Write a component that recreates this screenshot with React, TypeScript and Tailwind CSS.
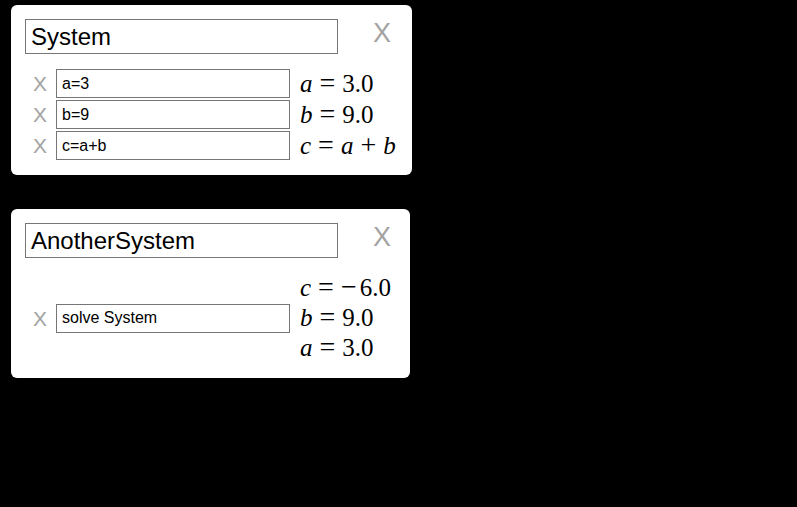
import React from 'react';

type Row = { text: string; result?: React.ReactNode };

const V = ({ children }: { children: React.ReactNode }) => <i className="italic">{children}</i>;

// relation / operator with the wider spacing a TeX renderer gives
const Op = ({ children }: { children: React.ReactNode }) => (
  <span className="mx-[7px] text-[28px] leading-none">{children}</span>
);

const Eq = ({ children }: { children: React.ReactNode }) => (
  <div className="h-[30px] leading-[30px] text-[25px] text-black whitespace-nowrap font-['Liberation_Serif',serif]">
    {children}
  </div>
);

const SmallX = () => (
  <span className="w-[31px] pl-[8px] text-[21px] leading-none text-[#a3a3a3] font-['Liberation_Sans',Arial,sans-serif] select-none">
    X
  </span>
);

const Card = ({
  title,
  width,
  children,
}: {
  title: string;
  width: string;
  children: React.ReactNode;
}) => (
  <div className={`bg-white rounded-[6px] pl-[14px] pt-[14px] pb-[15px] ${width}`}>
    <div className="flex items-center">
      <div className="w-[313px] h-[35px] border border-[#767676] flex items-center px-[5px] text-[24px] text-black font-['Liberation_Sans',Arial,sans-serif]">
        {title}
      </div>
      <span className="ml-[35px] -mt-[7px] text-[27px] leading-none text-[#a3a3a3] font-['Liberation_Sans',Arial,sans-serif]">
        X
      </span>
    </div>
    {children}
  </div>
);

const Input = ({ text }: { text: string }) => (
  <div className="w-[234px] h-[29px] border border-[#767676] flex items-center px-[5px] text-[16px] text-black font-['Liberation_Sans',Arial,sans-serif]">
    {text}
  </div>
);

export default function App() {
  const rows: Row[] = [
    { text: 'a=3', result: <><V>a</V><Op>=</Op>3.0</> },
    { text: 'b=9', result: <><V>b</V><Op>=</Op>9.0</> },
    { text: 'c=a+b', result: <><V>c</V><Op>=</Op><V>a</V><Op>+</Op><V>b</V></> },
  ];

  return (
    <div className="w-[797px] h-[507px] bg-black pl-[11px] pt-[5px]">
      <Card title="System" width="w-[401px]">
        <div className="mt-[15px] flex flex-col gap-[2px]">
          {rows.map((r) => (
            <div key={r.text} className="flex items-center h-[29px]">
              <SmallX />
              <Input text={r.text} />
              <div className="ml-[10px]">
                <Eq>{r.result}</Eq>
              </div>
            </div>
          ))}
        </div>
      </Card>

      <div className="mt-[34px]">
        <Card title="AnotherSystem" width="w-[399px]">
          <div className="mt-[15px] flex items-center">
            <SmallX />
            <Input text="solve System" />
            <div className="ml-[10px] flex flex-col">
              <Eq>
                <V>c</V><Op>=</Op>
                <span className="mr-[3px] text-[28px] leading-none">−</span>6.0
              </Eq>
              <Eq><V>b</V><Op>=</Op>9.0</Eq>
              <Eq><V>a</V><Op>=</Op>3.0</Eq>
            </div>
          </div>
        </Card>
      </div>
    </div>
  );
}
